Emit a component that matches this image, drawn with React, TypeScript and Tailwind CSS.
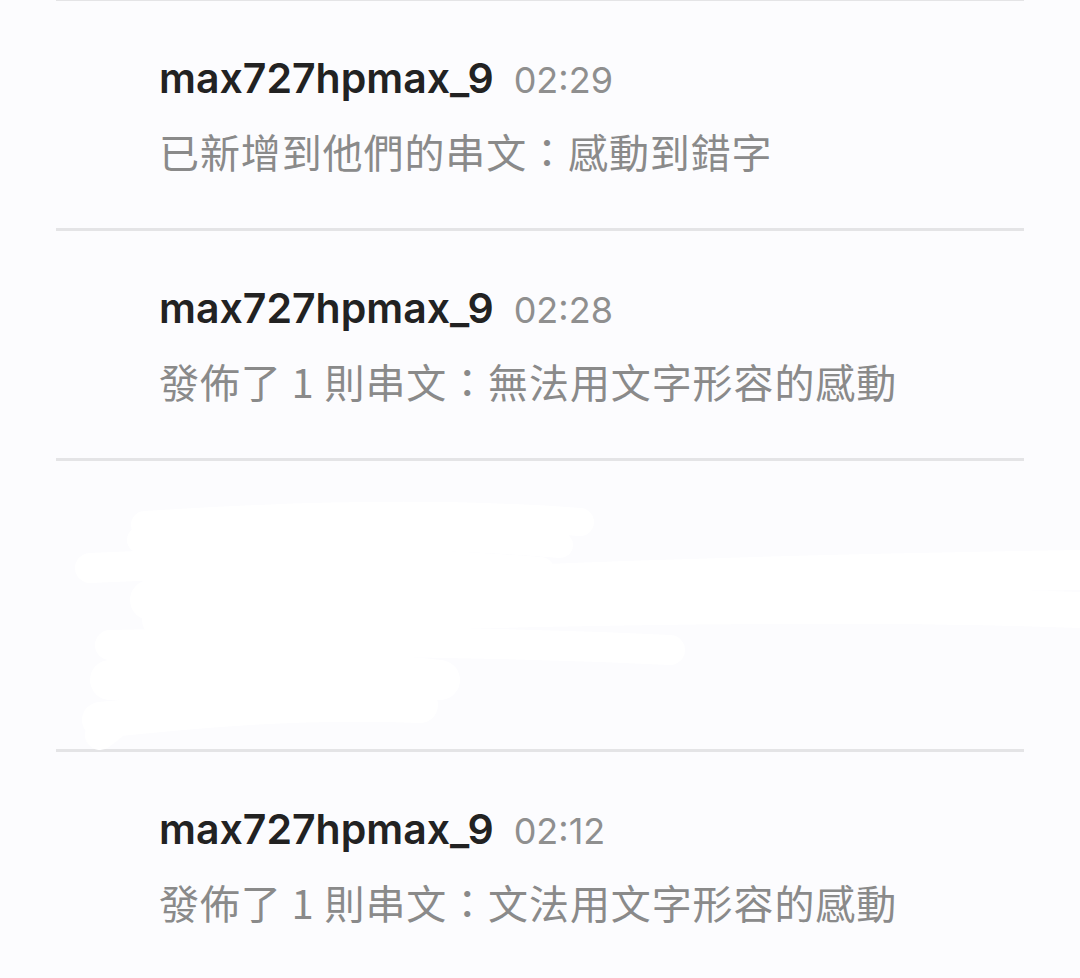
import React from "react";

type Item = { name: string; time: string; text: string };

const Row = ({ item }: { item: Item }) => (
  <div className="h-[230px] border-t-[3px] border-[#e4e4e6] pl-[103px] pt-[53px]">
    <div className="flex items-baseline h-[48px] leading-[48px]">
      <span
        className="text-[41px] font-semibold text-[#222222] tracking-[0px]"
        style={{ fontFamily: "Inter, Roboto, sans-serif" }}
      >
        {item.name}
      </span>
      <span
        className="ml-[20px] text-[36px] text-[#8f8f8f]"
        style={{ fontFamily: "Inter, Roboto, sans-serif" }}
      >
        {item.time}
      </span>
    </div>
    <div
      className="mt-[25px] h-[48px] leading-[48px] text-[40px] text-[#8a8a8a] tracking-[0.9px]"
      style={{ fontFamily: "'Noto Sans CJK TC', 'Noto Sans', sans-serif" }}
    >
      {item.text}
    </div>
  </div>
);

export default function App() {
  const items: Item[] = [
    { name: "max727hpmax_9", time: "02:29", text: "已新增到他們的串文：感動到錯字" },
    { name: "max727hpmax_9", time: "02:28", text: "發佈了 1 則串文：無法用文字形容的感動" },
  ];
  const last: Item = { name: "max727hpmax_9", time: "02:12", text: "發佈了 1 則串文：文法用文字形容的感動" };
  return (
    <div className="relative w-[1080px] h-[978px] overflow-hidden bg-[#fcfcfe]">
      <div className="px-[56px] -mt-[2px]">
        {items.map((it, i) => (
          <Row key={i} item={it} />
        ))}
        <div className="h-[291px] border-t-[3px] border-[#e4e4e6]" />
        <Row item={last} />
      </div>
      <svg
        className="absolute left-0 top-[500px] pointer-events-none"
        width="1080"
        height="260"
        viewBox="0 500 1080 260"
      >
        <g fill="none" stroke="#ffffff" strokeLinecap="round" strokeLinejoin="round">
          <path d="M145 525 C300 515 450 512 580 522" strokeWidth="28" />
          <path d="M140 540 C300 535 450 535 560 545" strokeWidth="26" />
          <path d="M90 568 C250 560 420 562 540 572" strokeWidth="30" />
          <path d="M150 600 C400 590 700 575 1080 570" strokeWidth="40" />
          <path d="M160 620 C450 610 800 600 1080 610" strokeWidth="36" />
          <path d="M110 645 C300 640 500 642 670 650" strokeWidth="30" />
          <path d="M110 680 C250 675 380 672 440 680" strokeWidth="40" />
          <path d="M100 720 C200 710 300 700 420 705" strokeWidth="36" />
          <path d="M100 735 C150 700 160 660 170 630" strokeWidth="30" />
        </g>
      </svg>
    </div>
  );
}
